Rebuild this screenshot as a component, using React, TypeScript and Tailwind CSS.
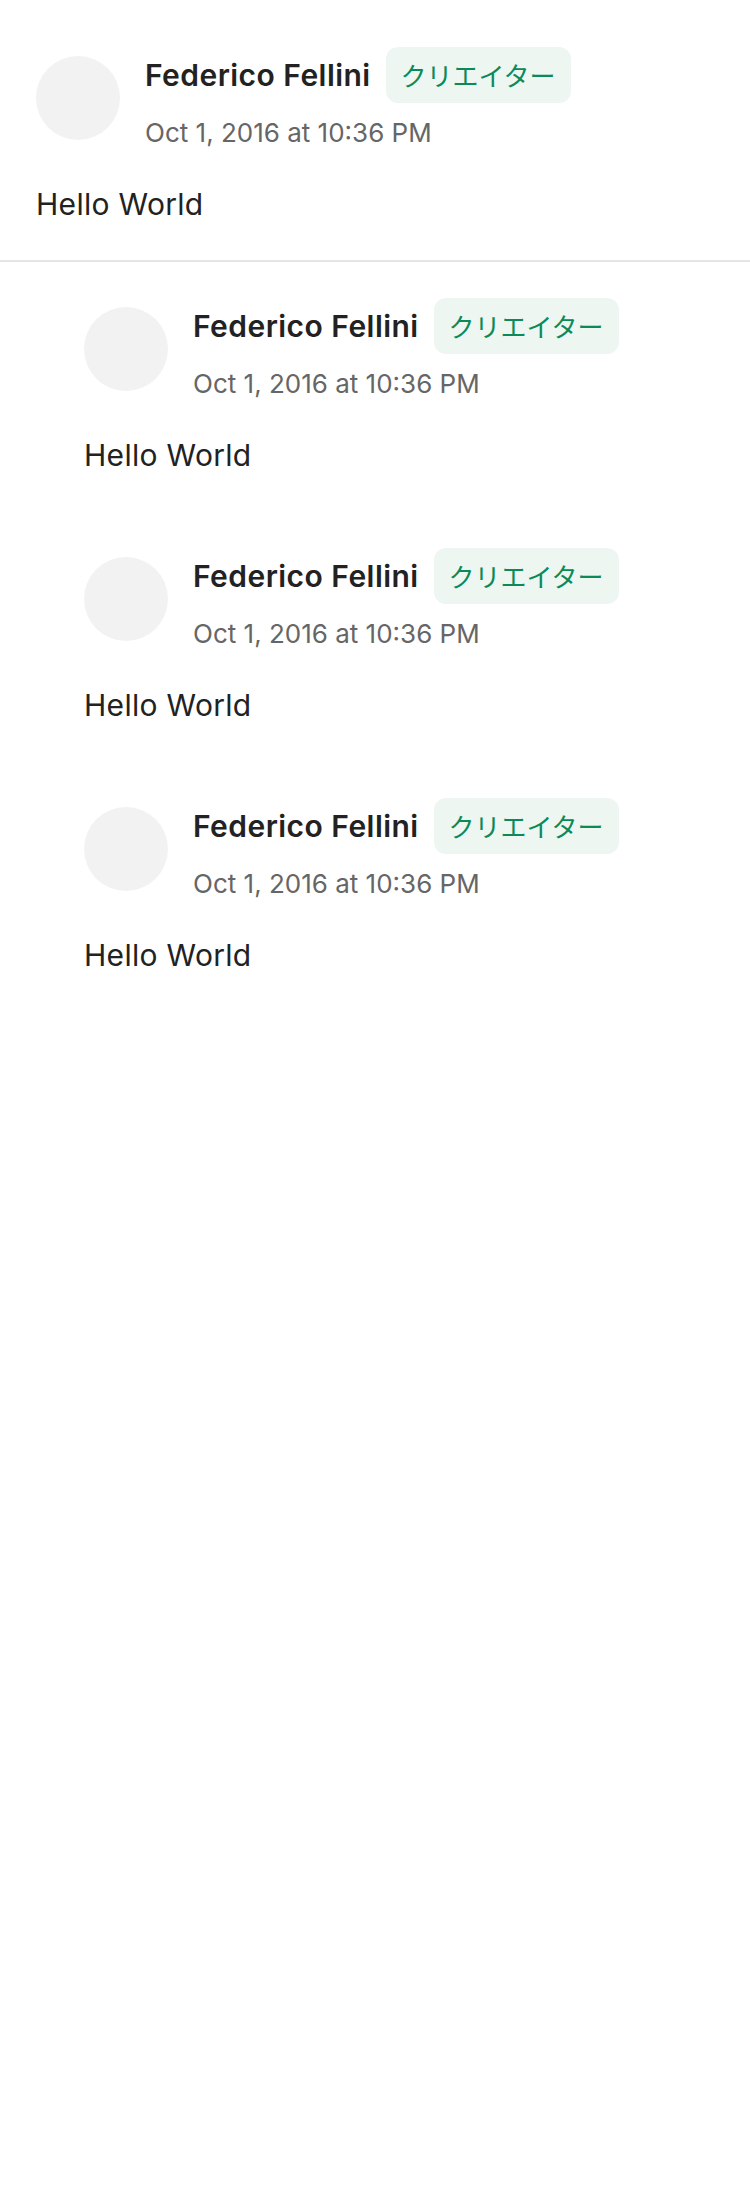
import React from "react";

function Comment({ reply }: { reply?: boolean }) {
  return (
    <div className={reply ? "pl-[84px] pr-[36px] py-[36px]" : "pl-[36px] pr-[36px] pt-[47px] pb-[35px]"}>
      <div className="flex items-center gap-[25px]">
        <div className="w-[84px] h-[84px] mb-[2px] rounded-full bg-[#f2f2f2] shrink-0" />
        <div className="flex flex-col">
          <div className="flex items-center h-[56px]">
            <span className="text-[30px] leading-[40px] font-semibold tracking-[0.45px] text-[#222222]">Federico Fellini</span>
            <span
              className="ml-[15px] h-[56px] px-[15px] flex items-center rounded-[12px] bg-[#eef6f2] text-[#0b8a58] text-[26px] leading-[32px]"
              style={{ fontFamily: '"Noto Sans CJK JP", sans-serif' }}
            >
              クリエイター
            </span>
          </div>
          <div className="mt-[12px] text-[26px] leading-[36px] text-[#666666]">Oct 1, 2016 at 10:36 PM</div>
        </div>
      </div>
      <div className="mt-[32px] text-[30px] leading-[42px] tracking-[0.3px] text-[#222222]">Hello World</div>
    </div>
  );
}

export default function App() {
  return (
    <div className="w-[750px] min-h-[2200px] bg-white" style={{ fontFamily: 'Inter, "Noto Sans CJK JP", sans-serif' }}>
      <Comment />
      <div className="h-[2px] bg-[#e5e5e5]" />
      <Comment reply />
      <Comment reply />
      <Comment reply />
    </div>
  );
}
